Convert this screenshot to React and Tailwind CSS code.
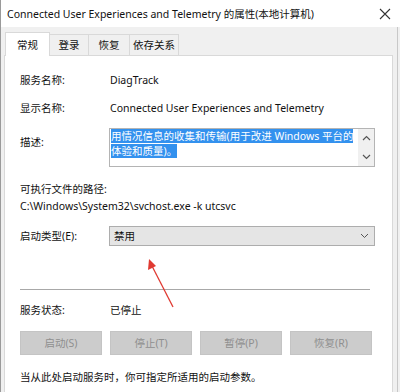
import React from "react";

const font = { fontFamily: '"Noto Sans", "Noto Sans CJK SC", sans-serif' };

const Tab = ({ label, active, w }) => (
  <div
    className={
      active
        ? "h-[24px] w-[45px] bg-white border border-b-0 border-[#d9d9d9] flex items-center justify-center -mb-px relative z-10"
        : `h-[21px] ${w} bg-[#f0f0f0] border border-b-0 border-l-0 border-[#d9d9d9] flex items-center justify-center`
    }
  >
    {label}
  </div>
);

const Btn = ({ label }) => (
  <div className="w-[82px] h-[24px] bg-[#cccccc] border border-[#c4c4c4] flex items-center justify-center text-[#8f8f8f]">
    {label}
  </div>
);

export default function App() {
  return (
    <div
      className="w-[400px] h-[392px] bg-[#f0f0f0] relative overflow-hidden text-[10.5px] text-[#111] leading-[16px] border-l border-[#9a9a9a]"
      style={font}
    >
      {/* title bar */}
      <div className="h-[27px] bg-white flex items-center pl-[6px] pr-[8px] justify-between">
        <span>Connected User Experiences and Telemetry 的属性(本地计算机)</span>
        <svg width="12" height="12" viewBox="0 0 12 12" className="mr-[1px]">
          <path d="M1 1 L11 11 M11 1 L1 11" stroke="#333" strokeWidth="1.1" />
        </svg>
      </div>

      {/* tabs */}
      <div className="flex items-end h-[28px] pl-[4px]">
        <Tab label="常规" active />
        <Tab label="登录" w="w-[39px]" />
        <Tab label="恢复" w="w-[41px]" />
        <Tab label="依存关系" w="w-[49px]" />
      </div>

      {/* panel */}
      <div className="ml-[3px] w-[389px] h-[340px] bg-white border border-[#d9d9d9] px-[15px]">
        <div className="flex items-center h-[16px] mt-[16px]">
          <div className="w-[90px]">服务名称:</div>
          <div>DiagTrack</div>
        </div>
        <div className="flex items-center h-[16px] mt-[12px]">
          <div className="w-[90px]">显示名称:</div>
          <div>Connected User Experiences and Telemetry</div>
        </div>

        <div className="flex mt-[12px]">
          <div className="w-[89px] pt-[6px]">描述:</div>
          <div className="w-[266px] h-[39px] border border-[#b4b4b4] flex">
            <div className="flex-1 pl-[1px] leading-[15px] overflow-hidden whitespace-nowrap">
              <div>
                <span className="bg-[#3391ee] text-white">用情况信息的收集和传输(用于改进 Windows 平台的</span>
              </div>
              <div>
                <span className="bg-[#3391ee] text-white">体验和质量)。</span>
              </div>
            </div>
            <div className="w-[16px] bg-[#f0f0f0] flex flex-col items-center justify-between py-[6px]">
              <svg width="9" height="6" viewBox="0 0 9 6">
                <path d="M1 5 L4.5 1.5 L8 5" fill="none" stroke="#555" strokeWidth="1.2" />
              </svg>
              <svg width="9" height="6" viewBox="0 0 9 6">
                <path d="M1 1 L4.5 4.5 L8 1" fill="none" stroke="#555" strokeWidth="1.2" />
              </svg>
            </div>
          </div>
        </div>

        <div className="h-[16px] mt-[14px] flex items-center">可执行文件的路径:</div>
        <div className="h-[16px] mt-[1px] flex items-center">C:\Windows\System32\svchost.exe -k utcsvc</div>

        <div className="flex items-center mt-[12px]">
          <div className="w-[89px]">启动类型(E):</div>
          <div className="w-[266px] h-[20px] bg-[#e5e5e5] border border-[#adadad] flex items-center justify-between pl-[4px] pr-[5px]">
            <span>禁用</span>
            <svg width="9" height="6" viewBox="0 0 9 6">
              <path d="M1 1 L4.5 4.5 L8 1" fill="none" stroke="#555" strokeWidth="1" />
            </svg>
          </div>
        </div>

        <div className="h-px bg-[#a8a8a8] mt-[43px] w-[350px]"></div>

        <div className="flex items-center h-[16px] mt-[12px]">
          <div className="w-[90px]">服务状态:</div>
          <div>已停止</div>
        </div>

        <div className="flex gap-[8px] mt-[13px]">
          <Btn label="启动(S)" />
          <Btn label="停止(T)" />
          <Btn label="暂停(P)" />
          <Btn label="恢复(R)" />
        </div>

        <div className="h-[16px] mt-[14px] flex items-center">当从此处启动服务时，你可指定所适用的启动参数。</div>
      </div>

      {/* window right border */}
      <div className="absolute top-[27px] right-[2px] w-px h-[365px] bg-[#c8c8c8]"></div>

      {/* red annotation arrow */}
      <svg className="absolute left-0 top-0 pointer-events-none" width="400" height="392">
        <line x1="172" y1="307" x2="151" y2="266" stroke="#e03a32" strokeWidth="1.3" />
        <path d="M148 259 L147 270 L155 266 Z" fill="#e03a32" />
      </svg>
    </div>
  );
}
